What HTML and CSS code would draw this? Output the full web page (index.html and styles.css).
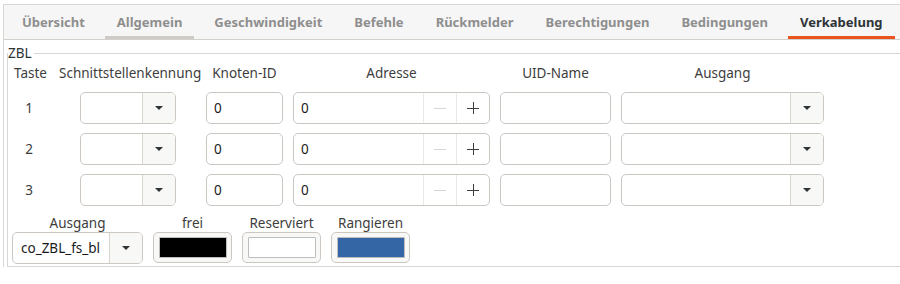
FILE: index.html
```html
<!DOCTYPE html>
<html lang="de">
<head>
  <meta charset="UTF-8" />
  <title>Verkabelung</title>
  <link rel="stylesheet" href="styles.css">
</head>
<body>
  <div class="notebook">
    <div class="tabs">
      <div class="tab">Übersicht</div>
      <div class="tab hover">Allgemein</div>
      <div class="tab">Geschwindigkeit</div>
      <div class="tab">Befehle</div>
      <div class="tab">Rückmelder</div>
      <div class="tab">Berechtigungen</div>
      <div class="tab">Bedingungen</div>
      <div class="tab active">Verkabelung</div>
    </div>

    <div class="page">
      <fieldset class="frame">
        <legend>ZBL</legend>

        <div class="grid" id="wiring">
          <div class="head">Taste</div>
          <div class="head">Schnittstellenkennung</div>
          <div class="head">Knoten-ID</div>
          <div class="head">Adresse</div>
          <div class="head">UID-Name</div>
          <div class="head">Ausgang</div>
          <!-- Rows added by JS -->
        </div>

        <div class="colors">
          <div class="group">
            <span class="caption">Ausgang</span>
            <div class="combo combo--out">
              <span class="combo-text">co_ZBL_fs_bl</span>
              <span class="combo-btn"><i class="arrow"></i></span>
            </div>
          </div>
          <div class="group">
            <span class="caption">frei</span>
            <div class="color-btn"><span class="swatch" style="background:#000000"></span></div>
          </div>
          <div class="group">
            <span class="caption">Reserviert</span>
            <div class="color-btn"><span class="swatch" style="background:#ffffff"></span></div>
          </div>
          <div class="group">
            <span class="caption">Rangieren</span>
            <div class="color-btn"><span class="swatch" style="background:#3465a4"></span></div>
          </div>
        </div>
      </fieldset>
    </div>
  </div>

  <script>
    const grid = document.getElementById("wiring");
    const minus = '<svg width="12" height="12" viewBox="0 0 12 12"><path d="M0 6.5h12" stroke="currentColor" stroke-width="1"/></svg>';
    const plus = '<svg width="12" height="12" viewBox="0 0 12 12"><path d="M0 6.5h12M6.5 0v12" stroke="currentColor" stroke-width="1"/></svg>';

    [1, 2, 3].forEach(n => {
      grid.insertAdjacentHTML("beforeend", `
        <div class="num">${n}</div>
        <div class="cell"><div class="combo combo--if"><span class="combo-text"></span><span class="combo-btn"><i class="arrow"></i></span></div></div>
        <div class="cell"><div class="entry entry--node">0</div></div>
        <div class="cell">
          <div class="spin">
            <span class="spin-text">0</span>
            <span class="spin-btn disabled">${minus}</span>
            <span class="spin-btn">${plus}</span>
          </div>
        </div>
        <div class="cell"><div class="entry entry--uid"></div></div>
        <div class="cell"><div class="combo combo--wide"><span class="combo-text"></span><span class="combo-btn"><i class="arrow"></i></span></div></div>
      `);
    });
  </script>
</body>
</html>
```

FILE: styles.css
```css
html, body {
  margin: 0;
  padding: 0;
  background: #ffffff;
  overflow: hidden;
}

body {
  font-family: 'Noto Sans', 'DejaVu Sans', sans-serif;
  font-size: 13.5px;
  color: #3d3d3d;
  width: 900px;
  height: 284px;
}

.notebook {
  margin: 4px 0 0 3px;
  width: 910px;
  border-top: 1px solid #dad6d2;
  border-left: 1px solid #dad6d2;
}

.tabs {
  display: flex;
  gap: 8px;
  height: 34px;
  padding-left: 6px;
  background: #f6f6f6;
  border-bottom: 1px solid #d3cfcb;
}

.tab {
  display: flex;
  align-items: center;
  padding: 2px 12px 0;
  font-weight: 700;
  font-size: 13px;
  color: #8e8e8e;
  border-bottom: 3px solid transparent;
  box-sizing: border-box;
}

.tab.hover {
  border-bottom-color: #cfcbc7;
}

.tab.active {
  color: #2e3436;
  border-bottom-color: #e95420;
}

.page {
  background: #ffffff;
  padding: 5px 0 0 3px;
}

.frame {
  margin: 0;
  padding: 0 0 2px 4px;
  border: 1px solid #d6d6d6;
  border-right: 0;
  min-width: 0;
}

.frame legend {
  padding: 0 2px 0 0;
  margin-left: -4px;
  line-height: 16px;
  color: #2e3436;
}

.grid {
  display: grid;
  grid-template-columns: 37px 137px 77px 197px 111px 203px;
  grid-template-rows: 19px repeat(3, 32px);
  column-gap: 10px;
  row-gap: 9px;
  margin-top: 3px;
}

.head {
  text-align: center;
  white-space: nowrap;
  line-height: 19px;
}

.num {
  display: flex;
  align-items: center;
  justify-content: center;
  padding-right: 3px;
}

.cell {
  display: flex;
  justify-content: center;
}

.entry,
.combo,
.spin,
.color-btn {
  box-sizing: border-box;
  height: 32px;
  border: 1px solid #cdc7c2;
  border-radius: 5px;
  background: #ffffff;
}

.entry {
  display: flex;
  align-items: center;
  padding-left: 7px;
  color: #1a1a1a;
  width: 100%;
}

.combo {
  display: flex;
  overflow: hidden;
}

.combo--if { width: 96px; }
.combo--wide { width: 203px; }
.combo--out { width: 131px; }

.combo-text {
  flex: 1;
  display: flex;
  align-items: center;
  padding-left: 8px;
  color: #1a1a1a;
}

.combo-btn {
  width: 32px;
  display: flex;
  align-items: center;
  justify-content: center;
  border-left: 1px solid #d8d4d0;
  background: #f8f8f7;
}

.arrow {
  width: 0;
  height: 0;
  border-left: 4px solid transparent;
  border-right: 4px solid transparent;
  border-top: 4px solid #2e3436;
}

.spin {
  display: flex;
  width: 100%;
  overflow: hidden;
}

.spin-text {
  flex: 1;
  display: flex;
  align-items: center;
  padding-left: 7px;
  color: #1a1a1a;
}

.spin-btn {
  width: 32px;
  display: flex;
  align-items: center;
  justify-content: center;
  border-left: 1px solid #ebe9e7;
  color: #3d3d3d;
}

.spin-btn.disabled {
  color: #d4d4d4;
}

.colors {
  display: flex;
  gap: 10px;
  margin-top: 9px;
}

.group {
  display: flex;
  flex-direction: column;
  align-items: center;
}

.caption {
  line-height: 17px;
}

.color-btn {
  width: 79px;
  height: 31px;
  padding: 4px 4px 4px 5px;
  background: #f8f8f7;
}

.swatch {
  display: block;
  height: 100%;
  box-sizing: border-box;
  border: 1px solid #bdbdbd;
  border-radius: 1px;
}
```
